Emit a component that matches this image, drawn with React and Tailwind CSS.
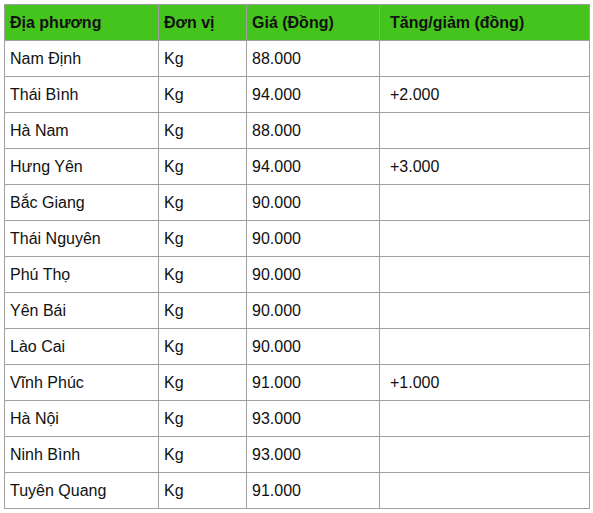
import React from "react";

const rows = [
  ["Nam Định", "Kg", "88.000", ""],
  ["Thái Bình", "Kg", "94.000", "+2.000"],
  ["Hà Nam", "Kg", "88.000", ""],
  ["Hưng Yên", "Kg", "94.000", "+3.000"],
  ["Bắc Giang", "Kg", "90.000", ""],
  ["Thái Nguyên", "Kg", "90.000", ""],
  ["Phú Thọ", "Kg", "90.000", ""],
  ["Yên Bái", "Kg", "90.000", ""],
  ["Lào Cai", "Kg", "90.000", ""],
  ["Vĩnh Phúc", "Kg", "91.000", "+1.000"],
  ["Hà Nội", "Kg", "93.000", ""],
  ["Ninh Bình", "Kg", "93.000", ""],
  ["Tuyên Quang", "Kg", "91.000", ""],
];

const cell = "border border-[#a0a0a0] h-9 px-[5px] text-left align-middle";

export default function App() {
  return (
    <div className="bg-white min-h-screen pt-1 pl-1 font-['Liberation_Sans',Arial,sans-serif] text-[16px] text-[#111]">
      <table className="border-collapse table-fixed w-[585px]">
        <colgroup>
          <col className="w-[154px]" />
          <col className="w-[88px]" />
          <col className="w-[133px]" />
          <col className="w-[210px]" />
        </colgroup>
        <thead>
          <tr className="bg-[#46c41e]">
            <th className={`${cell} font-bold`}>Địa phương</th>
            <th className={`${cell} font-bold`}>Đơn vị</th>
            <th className={`${cell} font-bold`}>Giá (Đồng)</th>
            <th className={`${cell} font-bold pl-[10px]`}>Tăng/giảm (đồng)</th>
          </tr>
        </thead>
        <tbody>
          {rows.map((r) => (
            <tr key={r[0]}>
              <td className={cell}>{r[0]}</td>
              <td className={cell}>{r[1]}</td>
              <td className={cell}>{r[2]}</td>
              <td className={`${cell} pl-[10px]`}>{r[3]}</td>
            </tr>
          ))}
        </tbody>
      </table>
    </div>
  );
}
